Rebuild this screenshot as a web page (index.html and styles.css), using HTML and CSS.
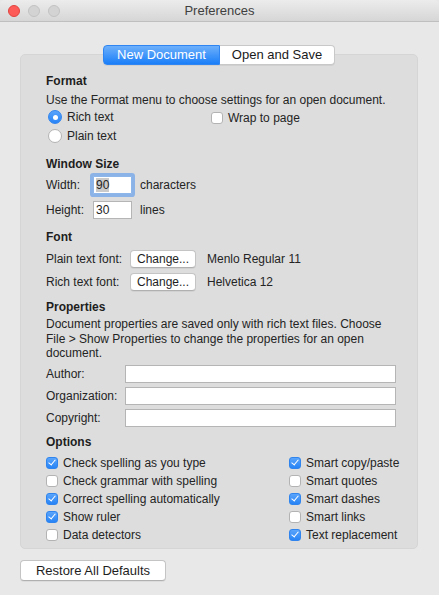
FILE: index.html
```html
<!DOCTYPE html>
<html lang="en">
<head>
    <meta charset="UTF-8">
    <meta name="viewport" content="width=device-width, initial-scale=1.0">
    <title>Preferences</title>
    <link rel="stylesheet" href="styles.css">
</head>
<body>
    <div class="window">
        <header class="titlebar">
            <div class="lights">
                <span class="light close"></span>
                <span class="light"></span>
                <span class="light"></span>
            </div>
            <div class="title">Preferences</div>
            <div></div>
        </header>

        <div class="content">
            <nav class="tabs">
                <span class="tab active">New Document</span>
                <span class="tab">Open and Save</span>
            </nav>

            <section class="panel">
                <h2>Format</h2>
                <p class="note">Use the Format menu to choose settings for an open document.</p>
                <div class="format-grid">
                    <div class="opt"><span class="radio on"></span>Rich text</div>
                    <div class="opt wrap"><span class="check"></span>Wrap to page</div>
                    <div class="opt"><span class="radio"></span>Plain text</div>
                </div>

                <h2 class="sec-window">Window Size</h2>
                <div class="size-row first">
                    <span class="size-label">Width:</span>
                    <span class="num focused"><span class="sel">90</span></span>
                    <span class="unit">characters</span>
                </div>
                <div class="size-row">
                    <span class="size-label">Height:</span>
                    <span class="num">30</span>
                    <span class="unit">lines</span>
                </div>

                <h2 class="sec-font">Font</h2>
                <div class="font-row first">
                    <span class="font-label">Plain text font:</span>
                    <button class="btn small">Change...</button>
                    <span class="font-name">Menlo Regular 11</span>
                </div>
                <div class="font-row">
                    <span class="font-label">Rich text font:</span>
                    <button class="btn small">Change...</button>
                    <span class="font-name">Helvetica 12</span>
                </div>

                <h2 class="sec-props">Properties</h2>
                <p class="note props-note">Document properties are saved only with rich text files. Choose File &gt; Show Properties to change the properties for an open document.</p>
                <div class="prop-row first"><span class="prop-label">Author:</span><span class="field"></span></div>
                <div class="prop-row"><span class="prop-label">Organization:</span><span class="field"></span></div>
                <div class="prop-row"><span class="prop-label">Copyright:</span><span class="field"></span></div>

                <h2 class="sec-options">Options</h2>
                <div class="options-grid">
                    <div class="opt"><span class="check on"></span>Check spelling as you type</div>
                    <div class="opt"><span class="check on"></span>Smart copy/paste</div>
                    <div class="opt"><span class="check"></span>Check grammar with spelling</div>
                    <div class="opt"><span class="check"></span>Smart quotes</div>
                    <div class="opt"><span class="check on"></span>Correct spelling automatically</div>
                    <div class="opt"><span class="check on"></span>Smart dashes</div>
                    <div class="opt"><span class="check on"></span>Show ruler</div>
                    <div class="opt"><span class="check"></span>Smart links</div>
                    <div class="opt"><span class="check"></span>Data detectors</div>
                    <div class="opt"><span class="check on"></span>Text replacement</div>
                </div>
            </section>

            <button class="btn restore">Restore All Defaults</button>
        </div>
    </div>
</body>
</html>
```

FILE: styles.css
```css
body {
    margin: 0;
    font-family: 'Liberation Sans', Arial, sans-serif;
    font-size: 12px;
    color: #242424;
    background: #e8e8e8;
}

.window {
    width: 439px;
    height: 595px;
    background: #e8e8e8;
    border-radius: 5px 5px 0 0;
    overflow: hidden;
}

/* title bar */
.titlebar {
    height: 21px;
    border-bottom: 1px solid #bfbfbf;
    background: linear-gradient(#ececec, #d6d6d6);
    display: grid;
    grid-template-columns: 1fr auto 1fr;
    align-items: center;
}

.lights {
    display: flex;
    gap: 8px;
    padding-left: 8px;
    padding-top: 1px;
}

.light {
    width: 12px;
    height: 12px;
    box-sizing: border-box;
    border-radius: 50%;
    background: #d3d3d3;
    border: 1px solid #c2c2c2;
}

.light.close {
    background: #fc5b57;
    border-color: #e0443f;
}

.title {
    font-size: 13px;
    color: #404040;
}

.content {
    padding: 23px 21px 0 20px;
}

/* segmented tabs */
.tabs {
    display: flex;
    justify-content: center;
    position: relative;
    z-index: 1;
}

.tab {
    height: 20px;
    box-sizing: border-box;
    font-size: 13px;
    line-height: 18px;
    text-align: center;
    background: #fff;
    border: 1px solid #c8c8c8;
    border-left: none;
    border-radius: 0 4px 4px 0;
    box-shadow: 0 1px 0 rgba(0, 0, 0, 0.06);
    width: 115px;
    color: #1a1a1a;
}

.tab.active {
    width: 117px;
    color: #fff;
    background: linear-gradient(#6db0fb, #1a7ef8);
    border: 1px solid #2f86f2;
    border-radius: 4px 0 0 4px;
}

/* main group box */
.panel {
    margin-top: -11px;
    background: #dddddd;
    border: 1px solid #d5d5d5;
    border-radius: 5px;
    padding: 18px 21px 4px 25px;
}

h2 {
    margin: 0;
    font-size: 12px;
    font-weight: bold;
    line-height: 16px;
    color: #1e1e1e;
}

.note {
    margin: 3px 0 0;
    line-height: 16px;
}

.opt {
    display: flex;
    align-items: center;
    height: 18px;
    white-space: nowrap;
}

.radio {
    width: 14px;
    height: 14px;
    box-sizing: border-box;
    border-radius: 50%;
    background: #fff;
    border: 1px solid #b3b3b3;
    margin: 0 5px 0 2px;
    flex: none;
    display: flex;
    align-items: center;
    justify-content: center;
}

.radio.on {
    background: linear-gradient(#5aa4fb, #2784f6);
    border-color: #2f84ee;
}

.radio.on::after {
    content: '';
    width: 5px;
    height: 5px;
    border-radius: 50%;
    background: #fff;
}

.check {
    width: 12px;
    height: 12px;
    box-sizing: border-box;
    border-radius: 3px;
    background: #fff;
    border: 1px solid #b3b3b3;
    margin-right: 5px;
    flex: none;
    position: relative;
}

.check.on {
    background: linear-gradient(#5aa4fb, #2784f6);
    border-color: #2f84ee;
}

.check.on::after {
    content: '';
    position: absolute;
    left: 3px;
    top: 0;
    width: 3px;
    height: 6px;
    border: solid #fff;
    border-width: 0 1.6px 1.6px 0;
    transform: rotate(40deg);
}

.format-grid {
    display: grid;
    grid-template-columns: 164px 1fr;
}

.wrap {
    margin-top: 1px;
}

.wrap .check {
    margin-left: 1px;
}

/* window size */
.sec-window {
    margin-top: 11px;
}

.size-row {
    display: flex;
    align-items: center;
    height: 22px;
    margin-top: 2px;
}

.size-row.first {
    height: 24px;
    margin-top: 1px;
}

.size-label {
    width: 47px;
}

.num {
    width: 39px;
    height: 18px;
    box-sizing: border-box;
    background: #fff;
    border: 1px solid #b5b5b5;
    padding-left: 2px;
    line-height: 16px;
    font-size: 12px;
}

.num.focused {
    border-color: #8db6ea;
    box-shadow: 0 0 0 3px rgba(96, 156, 236, 0.65);
    border-radius: 1px;
}

.sel {
    background: #cacaca;
}

.unit {
    margin-left: 8px;
}

/* font */
.sec-font {
    margin-top: 8px;
}

.font-row {
    display: flex;
    align-items: center;
    height: 22px;
    margin-top: 1px;
}

.font-row.first {
    margin-top: 3px;
}

.font-label {
    width: 84px;
}

.btn {
    font-family: inherit;
    color: #1e1e1e;
    background: #fff;
    border: 1px solid #c4c4c4;
    border-bottom-color: #b0b0b0;
    border-radius: 4px;
    box-shadow: 0 1px 0 rgba(0, 0, 0, 0.05);
    padding: 0;
    cursor: pointer;
}

.btn.small {
    width: 66px;
    height: 18px;
    font-size: 12px;
}

.font-name {
    margin-left: 11px;
}

/* properties */
.sec-props {
    margin-top: 6px;
}

.props-note {
    margin-top: 2px;
    line-height: 14.5px;
}

.prop-row {
    display: flex;
    align-items: center;
    height: 20px;
    margin-top: 2px;
}

.prop-row.first {
    margin-top: 3px;
}

.prop-label {
    width: 79px;
}

.field {
    flex: 1;
    height: 18px;
    box-sizing: border-box;
    background: #fff;
    border: 1px solid #b5b5b5;
}

/* options */
.sec-options {
    margin-top: 6px;
}

.options-grid {
    margin-top: 4px;
    display: grid;
    grid-template-columns: 243px 1fr;
}

.restore {
    margin-top: 11px;
    width: 146px;
    height: 21px;
    font-size: 13px;
}
```
